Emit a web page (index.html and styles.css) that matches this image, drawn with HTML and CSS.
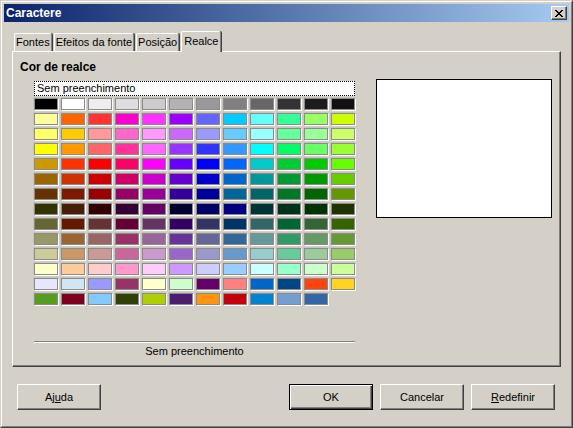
FILE: index.html
```html
<!DOCTYPE html>
<html lang="pt">
<head>
<meta charset="utf-8">
<title>Caractere</title>
<link rel="stylesheet" href="styles.css">
</head>
<body>
<div class="window">
  <div class="frame">
    <div class="titlebar">
      <span class="title">Caractere</span>
      <div class="close">
        <svg width="8" height="7" viewBox="0 0 8 7" shape-rendering="crispEdges">
          <path d="M0 0h2v1H0zM6 0h2v1H6zM1 1h2v1H1zM5 1h2v1H5zM2 2h4v1H2zM3 3h2v1H3zM2 4h4v1H2zM1 5h2v1H1zM5 5h2v1H5zM0 6h2v1H0zM6 6h2v1H6z" fill="#000"/>
        </svg>
      </div>
    </div>
    <div class="content">
      <div class="tabs">
        <div class="tab">Fontes</div>
        <div class="tab">Efeitos da fonte</div>
        <div class="tab">Posição</div>
        <div class="tab active">Realce</div>
      </div>
      <div class="panel">
        <div class="group-title">Cor de realce</div>
        <div class="row">
          <div class="left">
            <div class="nonebox">Sem preenchimento</div>
            <div class="grid">
              <span class="cell" style="background:#000000"></span><span class="cell" style="background:#ffffff"></span><span class="cell" style="background:#eeeeee"></span><span class="cell" style="background:#dddddd"></span><span class="cell" style="background:#cccccc"></span><span class="cell" style="background:#b2b2b2"></span><span class="cell" style="background:#999999"></span><span class="cell" style="background:#808080"></span><span class="cell" style="background:#666666"></span><span class="cell" style="background:#333333"></span><span class="cell" style="background:#1c1c1c"></span><span class="cell" style="background:#111111"></span>
              <span class="cell" style="background:#ffff99"></span><span class="cell" style="background:#ff6600"></span><span class="cell" style="background:#ff3333"></span><span class="cell" style="background:#ff00cc"></span><span class="cell" style="background:#ff33ff"></span><span class="cell" style="background:#9900ff"></span><span class="cell" style="background:#6666ff"></span><span class="cell" style="background:#00ccff"></span><span class="cell" style="background:#66ffff"></span><span class="cell" style="background:#33ff99"></span><span class="cell" style="background:#99ff66"></span><span class="cell" style="background:#ccff00"></span>
              <span class="cell" style="background:#ffff66"></span><span class="cell" style="background:#ffcc00"></span><span class="cell" style="background:#ff9999"></span><span class="cell" style="background:#ff66cc"></span><span class="cell" style="background:#ff99ff"></span><span class="cell" style="background:#cc66ff"></span><span class="cell" style="background:#9999ff"></span><span class="cell" style="background:#66ccff"></span><span class="cell" style="background:#99ffff"></span><span class="cell" style="background:#66ff99"></span><span class="cell" style="background:#99ff99"></span><span class="cell" style="background:#ccff66"></span>
              <span class="cell" style="background:#ffff00"></span><span class="cell" style="background:#ff9900"></span><span class="cell" style="background:#ff6666"></span><span class="cell" style="background:#ff3399"></span><span class="cell" style="background:#ff66ff"></span><span class="cell" style="background:#9933ff"></span><span class="cell" style="background:#3333ff"></span><span class="cell" style="background:#3399ff"></span><span class="cell" style="background:#00ffff"></span><span class="cell" style="background:#00ff66"></span><span class="cell" style="background:#66ff66"></span><span class="cell" style="background:#99ff33"></span>
              <span class="cell" style="background:#cc9900"></span><span class="cell" style="background:#ff3300"></span><span class="cell" style="background:#ff0000"></span><span class="cell" style="background:#ff0066"></span><span class="cell" style="background:#ff00ff"></span><span class="cell" style="background:#6600ff"></span><span class="cell" style="background:#0000ff"></span><span class="cell" style="background:#0066ff"></span><span class="cell" style="background:#00cccc"></span><span class="cell" style="background:#00cc33"></span><span class="cell" style="background:#00cc00"></span><span class="cell" style="background:#66ff00"></span>
              <span class="cell" style="background:#996600"></span><span class="cell" style="background:#cc3300"></span><span class="cell" style="background:#cc0000"></span><span class="cell" style="background:#cc0066"></span><span class="cell" style="background:#cc00cc"></span><span class="cell" style="background:#6600cc"></span><span class="cell" style="background:#0000cc"></span><span class="cell" style="background:#0066cc"></span><span class="cell" style="background:#009999"></span><span class="cell" style="background:#009933"></span><span class="cell" style="background:#009900"></span><span class="cell" style="background:#66cc00"></span>
              <span class="cell" style="background:#663300"></span><span class="cell" style="background:#801900"></span><span class="cell" style="background:#990000"></span><span class="cell" style="background:#990066"></span><span class="cell" style="background:#990099"></span><span class="cell" style="background:#330099"></span><span class="cell" style="background:#000099"></span><span class="cell" style="background:#006699"></span><span class="cell" style="background:#006666"></span><span class="cell" style="background:#007826"></span><span class="cell" style="background:#006600"></span><span class="cell" style="background:#669900"></span>
              <span class="cell" style="background:#333300"></span><span class="cell" style="background:#461e0a"></span><span class="cell" style="background:#330000"></span><span class="cell" style="background:#330033"></span><span class="cell" style="background:#660066"></span><span class="cell" style="background:#000033"></span><span class="cell" style="background:#000066"></span><span class="cell" style="background:#000080"></span><span class="cell" style="background:#003333"></span><span class="cell" style="background:#00331a"></span><span class="cell" style="background:#003300"></span><span class="cell" style="background:#1f3300"></span>
              <span class="cell" style="background:#666633"></span><span class="cell" style="background:#661900"></span><span class="cell" style="background:#663333"></span><span class="cell" style="background:#660033"></span><span class="cell" style="background:#663366"></span><span class="cell" style="background:#330066"></span><span class="cell" style="background:#333366"></span><span class="cell" style="background:#003366"></span><span class="cell" style="background:#336666"></span><span class="cell" style="background:#006633"></span><span class="cell" style="background:#336633"></span><span class="cell" style="background:#336600"></span>
              <span class="cell" style="background:#999966"></span><span class="cell" style="background:#996633"></span><span class="cell" style="background:#996666"></span><span class="cell" style="background:#993366"></span><span class="cell" style="background:#996699"></span><span class="cell" style="background:#663399"></span><span class="cell" style="background:#666699"></span><span class="cell" style="background:#336699"></span><span class="cell" style="background:#669999"></span><span class="cell" style="background:#339966"></span><span class="cell" style="background:#669966"></span><span class="cell" style="background:#669933"></span>
              <span class="cell" style="background:#cccc99"></span><span class="cell" style="background:#cc9966"></span><span class="cell" style="background:#cc9999"></span><span class="cell" style="background:#cc6699"></span><span class="cell" style="background:#cc99cc"></span><span class="cell" style="background:#9966cc"></span><span class="cell" style="background:#9999cc"></span><span class="cell" style="background:#6699cc"></span><span class="cell" style="background:#99cccc"></span><span class="cell" style="background:#66cc99"></span><span class="cell" style="background:#99cc99"></span><span class="cell" style="background:#99cc66"></span>
              <span class="cell" style="background:#ffffcc"></span><span class="cell" style="background:#ffcc99"></span><span class="cell" style="background:#ffcccc"></span><span class="cell" style="background:#ff99cc"></span><span class="cell" style="background:#ffccff"></span><span class="cell" style="background:#cc99ff"></span><span class="cell" style="background:#ccccff"></span><span class="cell" style="background:#99ccff"></span><span class="cell" style="background:#ccffff"></span><span class="cell" style="background:#99ffcc"></span><span class="cell" style="background:#ccffcc"></span><span class="cell" style="background:#ccff99"></span>
              <span class="cell" style="background:#e6e6ff"></span><span class="cell" style="background:#cfe7f5"></span><span class="cell" style="background:#9999ff"></span><span class="cell" style="background:#993366"></span><span class="cell" style="background:#ffffcc"></span><span class="cell" style="background:#ccffcc"></span><span class="cell" style="background:#660066"></span><span class="cell" style="background:#ff8080"></span><span class="cell" style="background:#0066cc"></span><span class="cell" style="background:#004586"></span><span class="cell" style="background:#ff420e"></span><span class="cell" style="background:#ffd320"></span>
              <span class="cell" style="background:#579d1c"></span><span class="cell" style="background:#7e0021"></span><span class="cell" style="background:#83caff"></span><span class="cell" style="background:#314004"></span><span class="cell" style="background:#aecf00"></span><span class="cell" style="background:#4b1f6f"></span><span class="cell" style="background:#ff950e"></span><span class="cell" style="background:#c5000b"></span><span class="cell" style="background:#0084d1"></span><span class="cell" style="background:#729fcf"></span><span class="cell" style="background:#3465a4"></span>
            </div>
            <div class="sep"></div>
            <div class="caption">Sem preenchimento</div>
          </div>
          <div class="preview"></div>
        </div>
      </div>
      <div class="buttons">
        <div class="btn">Aj<u>u</u>da</div>
        <div class="spacer"></div>
        <div class="btn default">OK</div>
        <div class="btn">Cancelar</div>
        <div class="btn"><u>R</u>edefinir</div>
      </div>
    </div>
  </div>
</div>
</body>
</html>
```

FILE: styles.css
```css
* { box-sizing: border-box; }

body {
  margin: 0;
  font-family: "Liberation Sans", Arial, sans-serif;
  font-size: 11px;
  color: #000;
  background: #d4d0c8;
}

.window {
  width: 573px;
  height: 428px;
  background: #d4d0c8;
  border: 1px solid;
  border-color: #d4d0c8 #404040 #404040 #d4d0c8;
  display: flex;
  flex-direction: column;
}

.frame {
  flex: 1;
  border: 1px solid;
  border-color: #ffffff #808080 #808080 #ffffff;
  padding: 2px;
  display: flex;
  flex-direction: column;
}

.titlebar {
  height: 18px;
  background: linear-gradient(to right, #0a246a, #a6caf0);
  display: flex;
  align-items: center;
  justify-content: space-between;
  padding: 0 2px 0 2px;
}

.title {
  color: #fff;
  font-weight: bold;
  font-size: 12px;
  line-height: 14px;
}

.close {
  width: 16px;
  height: 14px;
  background: #d4d0c8;
  border: 1px solid;
  border-color: #ffffff #404040 #404040 #ffffff;
  box-shadow: inset -1px -1px 0 #808080;
  display: flex;
  align-items: center;
  justify-content: center;
  padding-right: 1px;
}

.close svg { display: block; }

.content {
  flex: 1;
  padding: 9px 8px 0 8px;
  display: flex;
  flex-direction: column;
}

.tabs {
  display: flex;
  align-items: flex-end;
  gap: 2px;
  padding-left: 2px;
  margin-bottom: -1px;
  position: relative;
}

.tab {
  height: 18px;
  margin-bottom: 1px;
  padding: 0 1px;
  line-height: 17px;
  border-top: 1px solid #fff;
  border-left: 1px solid #fff;
  border-right: 1px solid #808080;
  box-shadow: 1px 0 0 #404040;
  border-top-left-radius: 2px;
  border-top-right-radius: 2px;
  background: #d4d0c8;
  white-space: nowrap;
}

.tab.active {
  height: 21px;
  margin-bottom: 0;
  line-height: 18px;
  padding: 0 2px;
}

.panel {
  height: 316px;
  border: 1px solid;
  border-color: #ffffff #404040 #404040 #ffffff;
  box-shadow: inset -1px -1px 0 #808080;
  padding: 8px 7px;
}

.group-title {
  font-weight: bold;
  font-size: 12px;
  line-height: 14px;
  margin-bottom: 5px;
}

.row {
  display: flex;
  align-items: flex-start;
}

.left {
  margin-left: 14px;
  width: 321px;
  padding-top: 2px;
}

.nonebox {
  height: 15px;
  background: #fff;
  border: 1px dotted #000;
  padding-left: 2px;
  line-height: 13px;
}

.grid {
  margin-top: 2px;
  display: grid;
  grid-template-columns: repeat(12, 24px);
  grid-auto-rows: 12px;
  gap: 3px;
}

.cell {
  display: block;
  border: 1px solid #8c8c8c;
  box-shadow: 1px 1px 0 #ffffff, -1px -1px 0 #c8c4bc;
}

.sep {
  margin-top: 36px;
  height: 2px;
  border-top: 1px solid #808080;
  border-bottom: 1px solid #ffffff;
}

.caption {
  text-align: center;
  line-height: 14px;
  margin-top: 1px;
}

.preview {
  margin-left: 21px;
  width: 176px;
  height: 139px;
  background: #fff;
  border: 1px solid #000;
}

.buttons {
  display: flex;
  gap: 7px;
  margin-top: 17px;
  padding: 0 6px 0 5px;
}

.spacer { flex: 1; }

.btn {
  width: 84px;
  height: 26px;
  border: 1px solid;
  border-color: #ffffff #404040 #404040 #ffffff;
  box-shadow: inset -1px -1px 0 #808080;
  display: flex;
  align-items: center;
  justify-content: center;
  line-height: 14px;
}

.btn u { text-underline-offset: 1px; }

.btn.default {
  border: 1px solid #000;
  box-shadow: inset 1px 1px 0 #ffffff, inset -1px -1px 0 #404040, inset -2px -2px 0 #808080;
}
```
